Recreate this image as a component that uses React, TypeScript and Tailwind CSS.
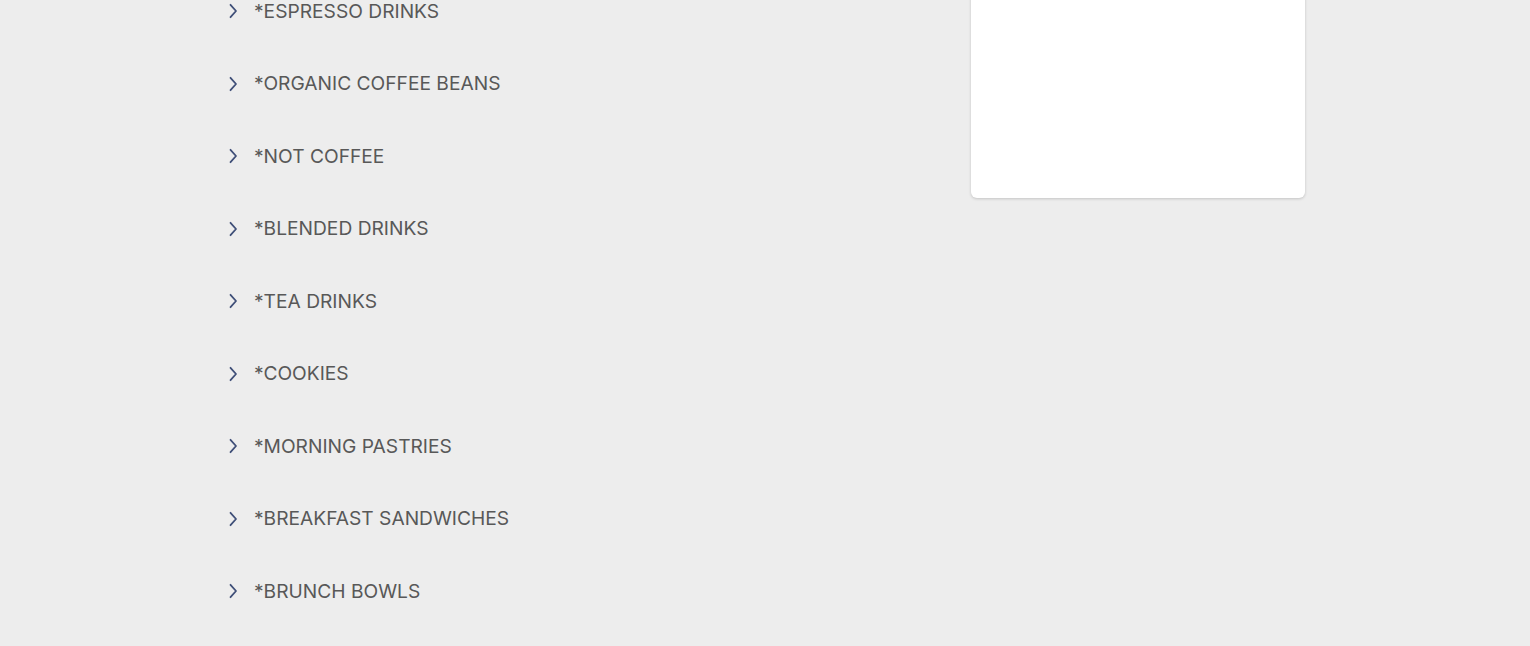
import React from "react"

const categories = [
  "*ESPRESSO DRINKS",
  "*ORGANIC COFFEE BEANS",
  "*NOT COFFEE",
  "*BLENDED DRINKS",
  "*TEA DRINKS",
  "*COOKIES",
  "*MORNING PASTRIES",
  "*BREAKFAST SANDWICHES",
  "*BRUNCH BOWLS",
]

function Chevron() {
  return (
    <svg width="12" height="16" viewBox="0 0 12 16" className="shrink-0">
      <path d="M3.5 1.8 L9 8 L3.5 14.2" fill="none" stroke="#3f4f78" strokeWidth="1.8" strokeLinecap="round" strokeLinejoin="round" />
    </svg>
  )
}

export default function App() {
  return (
    <div className="h-[646px] w-full overflow-hidden bg-[#ededed]" style={{ fontFamily: "Inter, 'Noto Sans', sans-serif" }}>
      <div className="mx-auto flex w-[1530px] pl-[227px]">
        <ul className="-mt-[25px] flex w-[744px] flex-col">
          {categories.map((c) => (
            <li key={c} className="flex h-[72.5px] items-center gap-[15px]">
              <Chevron />
              <span className="text-[19.2px] text-[#585858]">{c}</span>
            </li>
          ))}
        </ul>
        <div className="-mt-[40px] h-[238px] w-[334px] rounded-b-[6px] bg-white shadow-[0_1px_3px_rgba(0,0,0,0.18)]" />
      </div>
    </div>
  )
}
